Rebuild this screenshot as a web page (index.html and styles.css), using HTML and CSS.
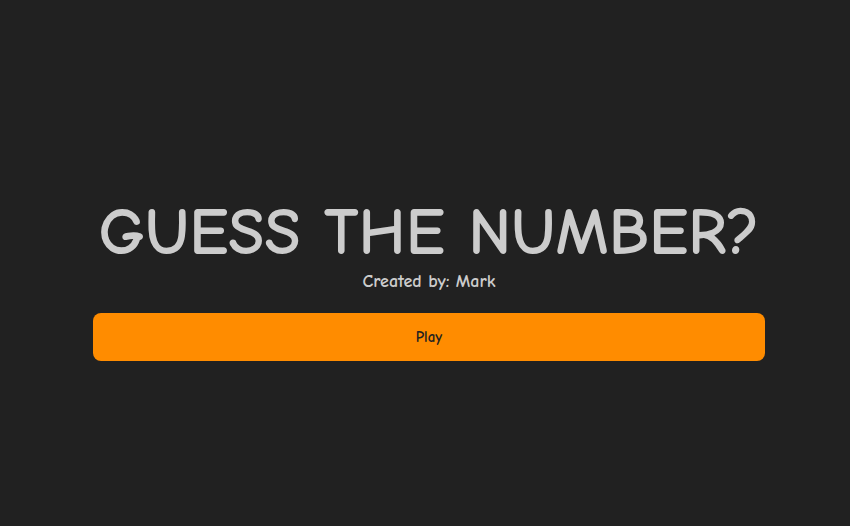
FILE: index.html
```html
<!DOCTYPE html>
<html lang="en">
<head>
<meta charset="utf-8">
<title>Guess the Number</title>
<link rel="stylesheet" href="styles.css">
</head>
<body>
<main class="screen">
  <div class="panel">
    <h1 class="title">GUESS THE NUMBER?</h1>
    <p class="credit">Created by: Mark</p>
    <button class="play">Play</button>
  </div>
</main>
</body>
</html>
```
FILE: styles.css
```css
html, body {
  margin: 0;
  padding: 0;
  background: #212121;
}
body {
  font-family: "Comic Sans MS", "Comic Neue", "Comic Sans", cursive, sans-serif;
  color: #cccccc;
}
.screen {
  height: 526px;
  display: flex;
  flex-direction: column;
  justify-content: flex-start;
  padding-top: 196px;
  padding-left: 8px;
  box-sizing: border-box;
}
.panel {
  width: 672px;
  margin: 0 auto;
  display: flex;
  flex-direction: column;
  align-items: center;
}
.title {
  margin: 0;
  font-size: 66px;
  font-weight: bold;
  line-height: 74px;
  color: #cccccc;
  letter-spacing: 0;
}
.credit {
  margin: 1px 0 0;
  font-size: 18px;
  font-weight: bold;
  line-height: 22px;
  color: #cccccc;
}
.play {
  margin-top: 20px;
  width: 100%;
  height: 48px;
  border: none;
  border-radius: 8px;
  background: #ff8c00;
  color: #212121;
  font-family: inherit;
  font-size: 15px;
  font-weight: bold;
  cursor: pointer;
}
```
